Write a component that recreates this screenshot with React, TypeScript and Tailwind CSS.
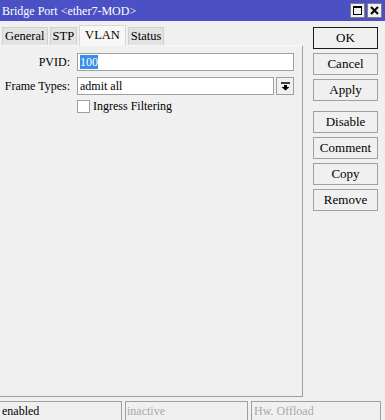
import React from 'react';

const tabs = ['General', 'STP', 'VLAN', 'Status'];
const actions = ['OK', 'Cancel', 'Apply', 'Disable', 'Comment', 'Copy', 'Remove'];

function Btn({ label, primary }: { label: string; primary?: boolean }) {
  return (
    <div
      className={`h-[22px] w-[65px] flex items-center justify-center bg-[#f0f0f0] text-[13px] text-black border ${
        primary ? 'border-[#1a1a1a]' : 'border-[#a0a0a0]'
      }`}
    >
      {label}
    </div>
  );
}

export default function App() {
  return (
    <div className="w-[385px] h-[420px] flex flex-col bg-[#f0f0f0] overflow-hidden whitespace-nowrap font-['Liberation_Serif','Times_New_Roman',serif]">
      {/* Title bar */}
      <div className="h-[21px] shrink-0 bg-[#4b50c4] flex items-center pl-[2px] pr-[3px]">
        <span className="text-white text-[12px] flex-1">Bridge Port &lt;ether7-MOD&gt;</span>
        <div className="flex gap-[2px]">
          <div className="w-[15px] h-[15px] bg-[#f0f0f0] border border-[#808080] flex items-center justify-center">
            <div className="w-[9px] h-[9px] border border-black border-t-2" />
          </div>
          <div className="w-[15px] h-[15px] bg-[#f0f0f0] border border-[#808080] flex items-center justify-center">
            <svg width="9" height="9" viewBox="0 0 9 9">
              <path d="M1 1 L8 8 M8 1 L1 8" stroke="black" strokeWidth="2" />
            </svg>
          </div>
        </div>
      </div>

      {/* Body */}
      <div className="flex flex-1 min-h-0">
        <div className="w-[303px] flex flex-col pt-[4px]">
          {/* Tabs */}
          <div className="flex items-end h-[20px] pl-[2px] gap-[2px]">
            {tabs.map((t) =>
              t === 'VLAN' ? (
                <div
                  key={t}
                  className="h-[21px] px-[5px] flex items-start text-[12.5px] bg-[#f7f7f7] border-t border-l border-r border-[#d8d8d8] -mb-[1px] z-10"
                >
                  {t}
                </div>
              ) : (
                <div
                  key={t}
                  className="h-[18px] px-[2px] flex items-center text-[12.5px] bg-[#e3e3e3] border-t border-l border-r border-[#d0d0d0]"
                >
                  {t}
                </div>
              )
            )}
          </div>

          {/* Panel */}
          <div className="flex-1 border-t border-[#f8f8f8] border-r border-b border-r-[#a0a0a0] border-b-[#a0a0a0] mb-[4px] text-[12px]">
            <div className="flex items-center mt-[7px] h-[18px]">
              <div className="w-[71px] text-right pr-[1px]">PVID:</div>
              <div className="ml-[6px] w-[217px] h-[18px] bg-white border border-[#a0a0a0] flex items-center pl-[2px]">
                <span className="bg-[#3a8ee6] text-white leading-[14px]">100</span>
              </div>
            </div>
            <div className="flex items-center mt-[6px] h-[18px]">
              <div className="w-[71px] text-right pr-[1px]">Frame Types:</div>
              <div className="ml-[6px] w-[197px] h-[18px] bg-white border border-[#a0a0a0] flex items-center pl-[2px]">
                admit all
              </div>
              <div className="ml-[2px] w-[18px] h-[18px] bg-[#f0f0f0] border border-[#a0a0a0] flex items-center justify-center">
                <svg width="9" height="9" viewBox="0 0 9 9">
                  <path d="M0 1 H9" stroke="black" strokeWidth="1.5" />
                  <path d="M3 3 H6 V5 H8.5 L4.5 8.5 L0.5 5 H3 Z" fill="black" />
                </svg>
              </div>
            </div>
            <div className="flex items-center mt-[4px] ml-[77px] h-[14px]">
              <div className="w-[13px] h-[13px] bg-white border border-[#a0a0a0]" />
              <span className="ml-[3px]">Ingress Filtering</span>
            </div>
          </div>
        </div>

        {/* Buttons */}
        <div className="flex-1 pt-[6px] pl-[10px] flex flex-col gap-[4px]">
          {actions.slice(0, 3).map((a) => (
            <Btn key={a} label={a} primary={a === 'OK'} />
          ))}
          <div className="h-[2px]" />
          {actions.slice(3).map((a) => (
            <Btn key={a} label={a} />
          ))}
        </div>
      </div>

      {/* Status bar */}
      <div className="h-[19px] shrink-0 flex gap-[3px] text-[12px] pr-[4px]">
        <div className="w-[122px] border-t border-r border-[#a0a0a0] pl-[2px] flex items-center">enabled</div>
        <div className="w-[123px] border-t border-l border-r border-[#a0a0a0] pl-[1px] flex items-center text-[#a8a8a8]">
          inactive
        </div>
        <div className="flex-1 border-t border-l border-r border-[#a0a0a0] pl-[2px] flex items-center text-[#a8a8a8]">
          Hw. Offload
        </div>
      </div>
    </div>
  );
}
